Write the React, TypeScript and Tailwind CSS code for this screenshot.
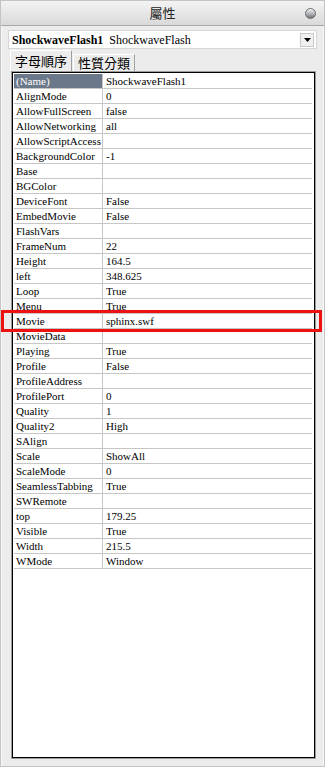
const rows: [string, string][] = [
  ["(Name)", "ShockwaveFlash1"],
  ["AlignMode", "0"],
  ["AllowFullScreen", "false"],
  ["AllowNetworking", "all"],
  ["AllowScriptAccess", ""],
  ["BackgroundColor", "-1"],
  ["Base", ""],
  ["BGColor", ""],
  ["DeviceFont", "False"],
  ["EmbedMovie", "False"],
  ["FlashVars", ""],
  ["FrameNum", "22"],
  ["Height", "164.5"],
  ["left", "348.625"],
  ["Loop", "True"],
  ["Menu", "True"],
  ["Movie", "sphinx.swf"],
  ["MovieData", ""],
  ["Playing", "True"],
  ["Profile", "False"],
  ["ProfileAddress", ""],
  ["ProfilePort", "0"],
  ["Quality", "1"],
  ["Quality2", "High"],
  ["SAlign", ""],
  ["Scale", "ShowAll"],
  ["ScaleMode", "0"],
  ["SeamlessTabbing", "True"],
  ["SWRemote", ""],
  ["top", "179.25"],
  ["Visible", "True"],
  ["Width", "215.5"],
  ["WMode", "Window"],
];

const serif = "font-['Liberation_Serif','Noto_Sans_CJK_TC',serif]";
const cjk = "font-['Noto_Sans_CJK_TC','Noto_Sans',sans-serif]";

export default function App() {
  return (
    <div className="w-[325px] h-[767px] bg-[#ececec] border border-[#c4c4c4] flex flex-col overflow-hidden">
      {/* Title bar */}
      <div className="h-[25px] shrink-0 flex items-center justify-center relative bg-gradient-to-b from-[#f4f4f4] to-[#d9d9d9] border-b border-[#a9a9a9]">
        <span className={`${cjk} text-[13px] text-[#222]`}>屬性</span>
        <span className="absolute right-[8px] top-[7px] w-[11px] h-[11px] rounded-full border border-[#6b6b6b] bg-gradient-to-b from-[#f2f2f2] via-[#b5b8bc] to-[#6f747a]" />
      </div>

      <div className="flex-1 flex flex-col px-[6px] pt-[4px] pb-[7px] border-l border-r border-[#f8f8f8]">
        {/* Object combo */}
        <div className="h-[19px] flex items-center bg-white border border-[#d6d6d6] pl-[3px] pr-[2px]">
          <span className={`${serif} text-[12px] font-bold text-black`}>ShockwaveFlash1</span>
          <span className={`${serif} text-[12px] text-black ml-[6px]`}>ShockwaveFlash</span>
          <span className="ml-auto w-[14px] h-[14px] flex items-center justify-center bg-[#f0f0f0] border border-[#c8c8c8]">
            <svg width="7" height="4" viewBox="0 0 7 4">
              <path d="M0 0h7L3.5 4z" fill="#000" />
            </svg>
          </span>
        </div>

        {/* Tabs */}
        <div className="flex items-end h-[22px] pl-[2px]">
          <div className={`${cjk} h-[21px] px-[4px] flex items-center text-[13px] text-black bg-[#ececec] border-t border-l border-white border-r border-r-[#a0a0a0]`}>
            字母順序
          </div>
          <div className={`${cjk} h-[17px] px-[4px] ml-[1px] flex items-center text-[13px] text-black bg-[#ececec] border-t border-l border-white border-r border-r-[#a0a0a0]`}>
            性質分類
          </div>
        </div>

        {/* Property grid */}
        <div className="flex-1 ml-[3px] mr-[1px] border border-[#9c9c9c]">
          <div className="h-full bg-white border border-black pt-[1px] pl-[1px] pr-[2px]">
            {rows.map(([name, value], i) => (
              <div
                key={name}
                className={`h-[15px] flex border-b border-[#c6c6c6] ${i === 16 ? "relative" : ""}`}
              >
                <div
                  className={`${serif} w-[89px] shrink-0 pl-[2px] text-[11px] leading-[14px] whitespace-nowrap overflow-hidden border-r border-[#c6c6c6] ${
                    i === 0 ? "bg-[#6b7889] text-white" : "text-black"
                  }`}
                >
                  {name}
                </div>
                <div className={`${serif} flex-1 pl-[3px] text-[11px] leading-[14px] text-black whitespace-nowrap`}>
                  {value}
                </div>
                {i === 16 && (
                  <div className="absolute left-[-13px] right-[-10px] top-[-4px] bottom-[-4px] border-[3px] border-[#ee1111]" />
                )}
              </div>
            ))}
          </div>
        </div>
      </div>
    </div>
  );
}
